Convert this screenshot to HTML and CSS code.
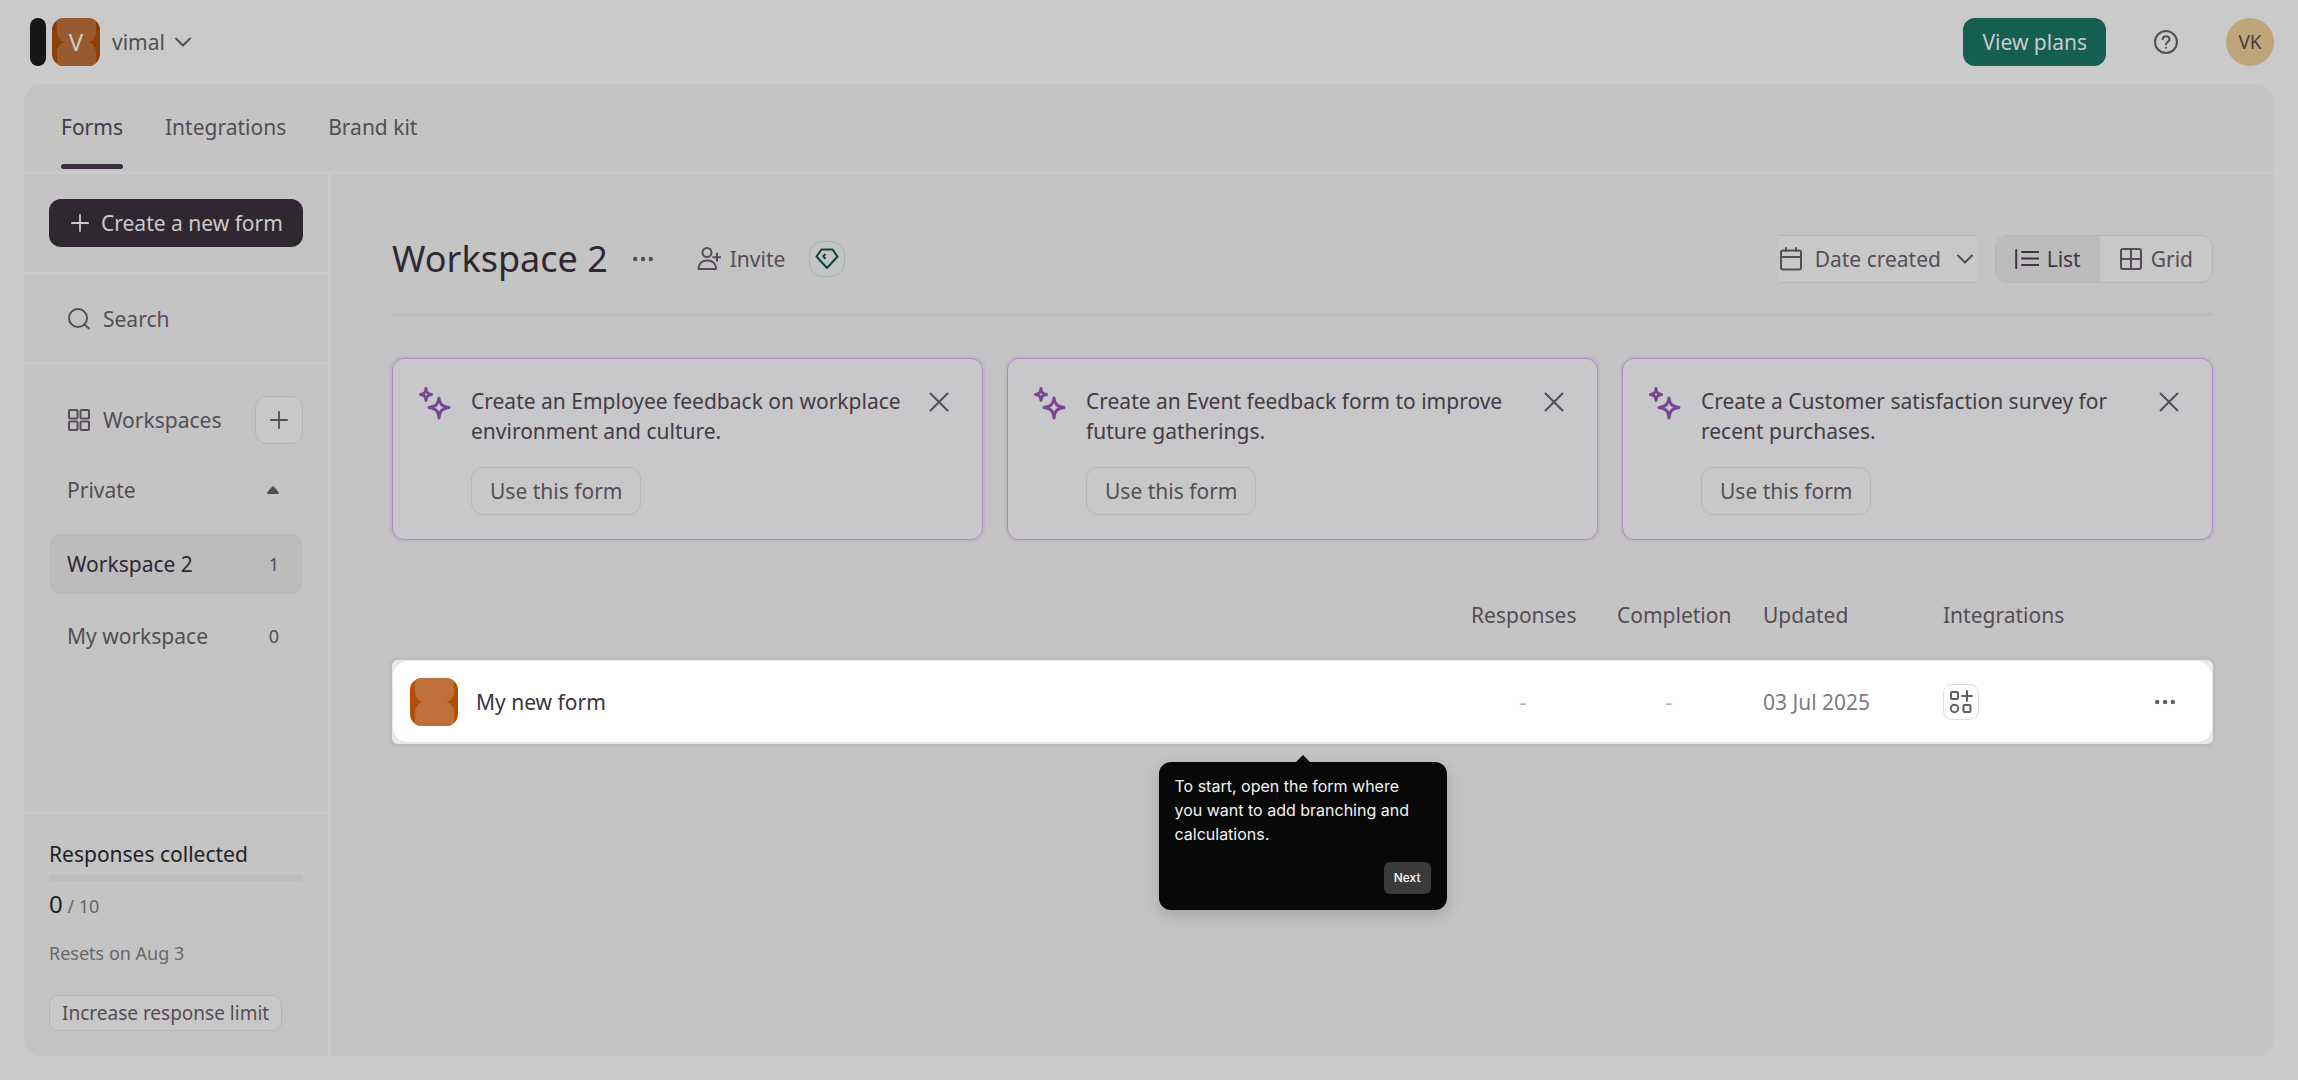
FILE: index.html
```html
<!DOCTYPE html>
<html lang="en">
<head>
<meta charset="utf-8">
<meta name="viewport" content="width=device-width, initial-scale=1">
<title>Workspace 2</title>
<link rel="stylesheet" href="styles.css">
</head>
<body>
<svg class="defs" aria-hidden="true">
  <symbol id="tile" viewBox="0 0 48 48">
    <rect width="48" height="48" fill="var(--tile-dark)"/>
    <path d="M5 0H44V13C44 19 41 23 36 24C41 25 44 29 44 35V48H5V35C5 29 8 25 13 24C8 23 5 19 5 13Z" fill="var(--tile-light)"/>
  </symbol>
  <symbol id="plus" viewBox="0 0 20 20"><path d="M10 1V19M1 10H19"/></symbol>
  <symbol id="chevron" viewBox="0 0 18 18"><path d="M2 5.500L9 12.500L16 5.500"/></symbol>
  <symbol id="dots" viewBox="0 0 20 20"><g fill="currentColor" stroke="none"><circle cx="2.200" cy="10" r="2.200"/><circle cx="10" cy="10" r="2.200"/><circle cx="17.800" cy="10" r="2.200"/></g></symbol>
  <symbol id="sparkles" viewBox="0 0 34 34">
    <path d="M8 2.500C8.300 6.500 9.500 8 13.500 8.500C9.500 9 8.300 10.500 8 14.500C7.700 10.500 6.500 9 2.500 8.500C6.500 8 7.700 6.500 8 2.500ZM21 12C21.500 18 24 20.500 31 21.500C24 22.500 21.500 25 21 32C20.500 25 18 22.500 11 21.500C18 20.500 20.500 18 21 12Z"/>
  </symbol>
  <symbol id="close" viewBox="0 0 20 20"><path d="M1.500 1.500L18.500 18.500M18.500 1.500L1.500 18.500"/></symbol>
</svg>

<header class="topbar">
  <span class="brand-mark"></span>
  <button class="account" type="button">
    <span class="account-tile"><svg class="tile tile-dim"><use href="#tile"/></svg><span class="account-letter">V</span></span>
    <span class="account-name">vimal<svg class="icon chevron"><use href="#chevron"/></svg></span>
  </button>
  <div class="topbar-actions">
    <button class="btn btn-plans" type="button">View plans</button>
    <button class="help" type="button" aria-label="Help">
      <svg class="icon help-icon" viewBox="0 0 24 24"><circle cx="12" cy="12" r="11"/><path d="M8.700 9.200C8.900 7.300 10.200 6.300 12 6.300C14 6.300 15.500 7.500 15.500 9.300C15.500 11.800 12 12 12 14.500"/><circle cx="12" cy="17.700" r="1" fill="currentColor" stroke="none"/></svg>
    </button>
    <button class="user" type="button">VK</button>
  </div>
</header>

<div class="panel">
  <nav class="tabs">
    <a class="tab tab-active" href="#forms">Forms</a>
    <a class="tab" href="#integrations">Integrations</a>
    <a class="tab" href="#brand-kit">Brand kit</a>
  </nav>

  <div class="body">
    <aside class="sidebar">
      <div class="side-block side-create">
        <button class="btn btn-create" type="button"><svg class="icon plus"><use href="#plus"/></svg>Create a new form</button>
      </div>
      <label class="side-block side-search">
        <svg class="icon side-icon" viewBox="0 0 24 24"><circle cx="11" cy="11" r="9"/><path d="M17.500 17.500L22 21.500"/></svg>
        <input type="search" placeholder="Search" aria-label="Search">
      </label>
      <div class="side-block side-workspaces">
        <div class="side-heading">
          <svg class="icon side-icon" viewBox="0 0 24 24"><rect x="2" y="2" width="8.500" height="8.500" rx="1"/><rect x="13.500" y="2" width="8.500" height="8.500" rx="1"/><rect x="2" y="13.500" width="8.500" height="8.500" rx="1"/><rect x="13.500" y="13.500" width="8.500" height="8.500" rx="1"/></svg>
          <span>Workspaces</span>
          <button class="btn-add" type="button" aria-label="Add workspace"><svg class="icon plus"><use href="#plus"/></svg></button>
        </div>
        <button class="side-group" type="button">Private
          <svg class="caret" viewBox="0 0 12 8"><path d="M1 8H11Q12.500 7.500 11.500 6L7 .7Q6 -.2 5 .7L.5 6Q-.5 7.500 1 8Z"/></svg>
        </button>
        <ul class="side-list">
          <li><a class="side-item side-item-active" href="#workspace-2">Workspace 2<span class="count">1</span></a></li>
          <li><a class="side-item" href="#my-workspace">My workspace<span class="count">0</span></a></li>
        </ul>
      </div>
      <div class="quota">
        <h2>Responses collected</h2>
        <div class="quota-bar"></div>
        <p class="quota-value"><strong>0</strong> / 10</p>
        <p class="quota-reset">Resets on Aug 3</p>
        <button class="btn-limit" type="button">Increase response limit</button>
      </div>
    </aside>

    <main class="main">
      <div class="heading">
        <h1>Workspace 2</h1>
        <button class="more" type="button" aria-label="Workspace options"><svg class="icon dots"><use href="#dots"/></svg></button>
        <button class="invite" type="button">
          <svg class="icon side-icon" viewBox="0 0 24 24"><circle cx="10" cy="5.500" r="4.500"/><path d="M1.500 22H19C19 16.500 15.500 13.500 10.200 13.500C5 13.500 1.500 16.500 1.500 22ZM20 6.500V14M16.300 10.200H23.700"/></svg>
          Invite
        </button>
        <span class="gem"><svg viewBox="0 0 24 22"><path d="M6.500 1.500H17.500L22.500 8.500L12 20L1.500 8.500Z"/><path d="M10.500 6L8.300 8.300L10.500 10.800"/></svg></span>
        <div class="view-tools">
          <label class="sort">
            <svg class="icon side-icon" viewBox="0 0 24 24"><rect x="2" y="3.500" width="20" height="19" rx="2"/><path d="M2 10H22M7 1V4M17 1V4"/></svg>
            <select aria-label="Sort by"><option>Date created</option></select>
            <svg class="icon chevron"><use href="#chevron"/></svg>
          </label>
          <div class="toggle">
            <button class="toggle-on" type="button"><svg class="icon side-icon" viewBox="0 0 24 24"><path d="M1.200 3V21M7 5H24M7 11.500H24M7 18H24"/></svg>List</button>
            <button type="button"><svg class="icon side-icon" viewBox="0 0 24 24"><rect x="2" y="2" width="20" height="20" rx="2"/><path d="M12 2V22M2 12H22"/></svg>Grid</button>
          </div>
        </div>
      </div>

      <section class="cards">
        <article class="card">
          <svg class="sparkles"><use href="#sparkles"/></svg>
          <div class="card-body"><p>Create an Employee feedback on workplace environment and culture.</p><button class="btn-use" type="button">Use this form</button></div>
          <button class="dismiss" type="button" aria-label="Dismiss"><svg class="icon close"><use href="#close"/></svg></button>
        </article>
        <article class="card">
          <svg class="sparkles"><use href="#sparkles"/></svg>
          <div class="card-body"><p>Create an Event feedback form to improve future gatherings.</p><button class="btn-use" type="button">Use this form</button></div>
          <button class="dismiss" type="button" aria-label="Dismiss"><svg class="icon close"><use href="#close"/></svg></button>
        </article>
        <article class="card">
          <svg class="sparkles"><use href="#sparkles"/></svg>
          <div class="card-body"><p>Create a Customer satisfaction survey for recent purchases.</p><button class="btn-use" type="button">Use this form</button></div>
          <button class="dismiss" type="button" aria-label="Dismiss"><svg class="icon close"><use href="#close"/></svg></button>
        </article>
      </section>

      <div class="forms">
        <table>
          <thead>
            <tr><td></td><th scope="col">Responses</th><th scope="col">Completion</th><th scope="col">Updated</th><th scope="col">Integrations</th><td></td></tr>
          </thead>
          <tbody>
            <tr>
              <td class="form-name"><svg class="tile"><use href="#tile"/></svg><a href="#form">My new form</a></td>
              <td><span class="empty">-</span></td>
              <td><span class="empty">-</span></td>
              <td>03 Jul 2025</td>
              <td><button class="btn-connect" type="button" aria-label="Add integration"><svg class="icon" viewBox="0 0 24 24"><rect x="2" y="2" width="7" height="7" rx="1"/><path d="M18 1V11M13 6H23"/><circle cx="5.500" cy="18.500" r="3.700"/><rect x="14.500" y="15" width="7" height="7" rx="1"/></svg></button></td>
              <td class="row-more"><button class="more" type="button" aria-label="Form options"><svg class="icon dots"><use href="#dots"/></svg></button></td>
            </tr>
          </tbody>
        </table>
        <div class="tip" role="dialog">
          <p>To start, open the form where you want to add branching and calculations.</p>
          <button type="button">Next</button>
        </div>
      </div>
    </main>
  </div>
</div>
</body>
</html>
```

FILE: styles.css
```css
:root {
  --page: #cacaca;
  --panel: #c4c4c4;
  --line: #b6b6b6;
  --soft: #bcbcbc;
  --ink: #302831;
  --text: #554d56;
  --muted: #686868;
  --tile-dark: #b04f08;
  --tile-light: #bf703a;
}

* { box-sizing: border-box; }

body {
  margin: 0;
  min-height: 100vh;
  padding: 0 24px 24px;
  display: flex;
  flex-direction: column;
  background: var(--page);
  color: var(--text);
  font: 21px/30px "Noto Sans", sans-serif;
}

button, input, select { font: inherit; color: inherit; }
button { margin: 0; padding: 0; border: 0; background: none; cursor: pointer; }
a { color: inherit; text-decoration: none; }
h1, h2, p, ul { margin: 0; padding: 0; font-weight: 400; }
ul { list-style: none; }
svg { display: block; flex: none; }

.defs { position: absolute; width: 0; height: 0; }
.icon { fill: none; stroke: currentColor; stroke-width: 2; stroke-linecap: round; stroke-linejoin: round; }
.chevron, .plus { width: 18px; height: 18px; }
.dots, .close { width: 20px; height: 20px; }
.side-icon { width: 24px; height: 24px; }
.tile { width: 48px; height: 48px; border-radius: 12px; }
.tile-dim { --tile-dark: #8c3f06; --tile-light: #985b30; }

/* Top bar */
.topbar { height: 84px; padding-left: 6px; display: flex; align-items: center; gap: 6px; }
.brand-mark { width: 16px; height: 48px; border-radius: 8px; background: #151515; }
.account { display: flex; align-items: center; gap: 12px; }
.account-name { display: flex; align-items: center; gap: 9px; }
.account-tile { display: grid; place-items: center; }
.account-tile > * { grid-area: 1 / 1; }
.account-letter { color: #d0cbc8; font-size: 24px; }
.topbar-actions { margin-left: auto; display: flex; align-items: center; gap: 48px; }
.btn { height: 48px; padding: 0 19px; border-radius: 12px; color: #cacaca; }
.btn-plans { background: #155e52; }
.help-icon { width: 24px; height: 24px; }
.user { width: 48px; height: 48px; border-radius: 50%; background: #bfa67a; color: #453c44; font-size: 19px; }

/* Panel and tabs */
.panel { flex: 1; display: flex; flex-direction: column; border-radius: 18px; background: var(--panel); }
.tabs { padding: 0 37px; display: flex; gap: 42px; border-bottom: 3px solid var(--page); }
.tab { height: 87px; padding-top: 28px; }
.tab-active { color: #453a46; }
.tab-active::after { content: ""; display: block; height: 5px; margin-top: 22px; border-radius: 3px; background: #3b303d; }
.body { flex: 1; display: flex; }

/* Sidebar */
.sidebar { flex: none; width: 307px; display: flex; flex-direction: column; border-right: 3px solid var(--page); }
.side-block { border-bottom: 3px solid var(--page); }
.side-create { padding: 25px; }
.btn-create { width: 100%; padding-left: 22px; display: flex; align-items: center; gap: 12px; white-space: nowrap; background: var(--ink); }
.side-search { height: 90px; padding: 0 25px 0 43px; display: flex; align-items: center; gap: 12px; }
.side-search input { min-width: 0; width: 100%; padding: 0; border: 0; outline: 0; background: none; }
.side-search input::placeholder { color: inherit; opacity: 1; }
.side-workspaces { flex: 1; padding: 31px 25px; }
.side-heading { padding-left: 18px; display: flex; align-items: center; gap: 12px; }
.btn-add { width: 48px; height: 48px; margin-left: auto; display: grid; place-items: center; border: 1px solid var(--line); border-radius: 12px; background: #c8c8c8; }
.side-group { width: 100%; height: 60px; margin: 16px 0 14px; padding: 0 24px 0 18px; display: flex; align-items: center; justify-content: space-between; }
.caret { width: 12px; height: 8px; fill: currentColor; }
.side-list { display: grid; gap: 12px; }
.side-item { height: 60px; padding: 0 24px 0 18px; display: flex; align-items: center; justify-content: space-between; border-radius: 12px; }
.side-item-active { background: var(--soft); color: var(--ink); }
.count { font-size: 18px; color: var(--text); }

.quota { padding: 25px; color: var(--muted); font-size: 18px; }
.quota h2 { color: #222; font-size: 21px; }
.quota-bar { height: 6px; margin: 6px 0 8px; border-radius: 3px; background: var(--soft); }
.quota strong { color: #222; font-size: 24px; font-weight: 400; }
.quota-reset { margin: 17px 0 27px; }
.btn-limit { height: 36px; padding: 0 12px; border: 1px solid var(--line); border-radius: 9px; background: #c8c8c8; color: var(--text); font-size: 19px; }

/* Workspace heading */
.main { flex: 1; min-width: 0; padding: 61px; }
.heading { padding-bottom: 30px; display: flex; align-items: center; border-bottom: 3px solid var(--soft); }
h1 { color: var(--ink); font-size: 36px; line-height: 48px; }
.heading .more { margin: 0 44px 0 25px; }
.invite { display: flex; align-items: center; gap: 9px; }
.gem { width: 36px; height: 36px; margin-left: 24px; display: grid; place-items: center; border: 1px solid #9cbab3; border-radius: 14px; }
.gem svg { width: 24px; height: 22px; fill: none; stroke: #0a463e; stroke-width: 2; stroke-linejoin: round; }
.view-tools { margin-left: auto; display: flex; gap: 18px; }
.sort { height: 48px; padding-right: 3px; display: flex; align-items: center; border: solid var(--line); border-width: 1px 0; background: #c8c8c8; }
.sort select { margin: 0 14px 0 12px; padding: 0; border: 0; outline: 0; background: none; appearance: none; }
.toggle { height: 48px; display: flex; overflow: hidden; border: 1px solid var(--line); border-radius: 12px; background: #c8c8c8; }
.toggle button { padding: 0 19px; display: flex; align-items: center; gap: 8px; }
.toggle .toggle-on { background: var(--soft); color: #3f3541; }

/* Suggestion cards */
.cards { margin-top: 42px; display: grid; grid-template-columns: repeat(3, 1fr); gap: 24px; }
.card { padding: 27px 33px 24px 25px; display: flex; border: 1px solid #b08cc0; border-radius: 12px; background: #c8c8ca; box-shadow: 0 0 0 2px #bfb7c3, 0 0 2px 2px #bfb7c3; }
.sparkles { width: 34px; height: 34px; fill: none; stroke: #7a4591; stroke-width: 3; stroke-linejoin: round; }
.card-body { flex: 1; margin: 0 19px; color: #443b45; }
.btn-use { height: 48px; margin-top: 21px; padding: 0 18px; border: 1px solid var(--line); border-radius: 12px; background: #c8c8c8; color: var(--text); }
.dismiss { align-self: flex-start; margin-top: 6px; }

/* Forms table */
.forms { position: relative; margin-top: 43px; }
table, thead, tbody { display: block; }
tr { display: grid; grid-template-columns: 1fr 146px 146px 180px 174px 96px; align-items: stretch; }
th, td { padding: 0; font-weight: 400; text-align: left; }
thead tr { height: 77px; align-items: center; padding-bottom: 13px; }
tbody tr { height: 84px; border-radius: 6px; background: #e9e9e9; box-shadow: 0 0 2px 3px #bdbdbd; }
tbody td { display: flex; align-items: center; border: solid #e6e6e6; border-width: 1px 0 2px; background: #fff; color: #807a81; }
tbody td:first-child { border-left-width: 1px; border-radius: 16px 0 0 16px; }
tbody td:last-child { border-right-width: 1px; border-radius: 0 16px 16px 0; }
tbody .form-name { padding-left: 17px; gap: 18px; color: #3c323e; }
.empty { width: 104px; text-align: center; color: #b5b2b5; }
.btn-connect { width: 36px; height: 36px; display: grid; place-items: center; border: 1px solid #dedede; border-radius: 9px; color: #655d67; }
.btn-connect svg { width: 24px; height: 24px; }
tbody .row-more { justify-content: center; color: #655d67; }

/* Tour tooltip */
.tip { position: absolute; top: calc(100% + 18px); left: 50%; width: 288px; margin-left: -144px; padding: 12px 16px 16px; border-radius: 12px; background: #080808; color: #f4f4f4; font: 16px/24px Inter, sans-serif; box-shadow: 0 6px 16px rgba(0, 0, 0, .16); }
.tip::before { content: ""; position: absolute; bottom: 100%; left: 50%; margin-left: -7px; border: solid transparent; border-width: 0 7px 7px; border-bottom-color: #080808; }
.tip button { height: 32px; margin: 16px 0 0 auto; padding: 0 10px; display: block; border-radius: 6px; background: #3a3a3a; color: #fff; font-size: 12px; font-weight: 500; }
```
